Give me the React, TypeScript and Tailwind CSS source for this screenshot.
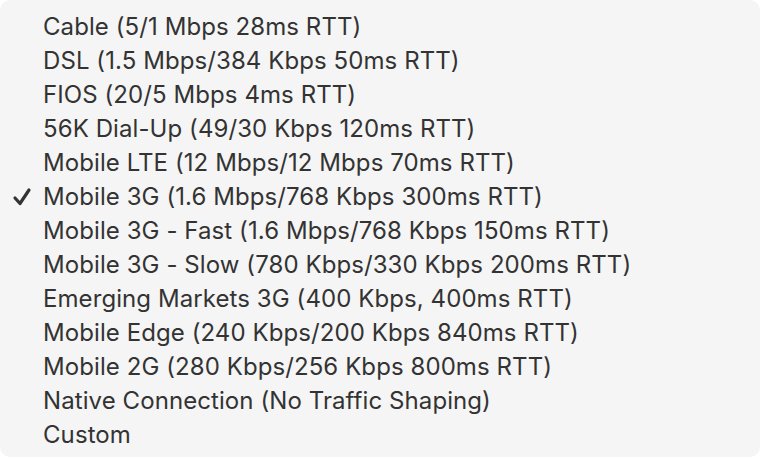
import React from "react";

const items = [
  "Cable (5/1 Mbps 28ms RTT)",
  "DSL (1.5 Mbps/384 Kbps 50ms RTT)",
  "FIOS (20/5 Mbps 4ms RTT)",
  "56K Dial-Up (49/30 Kbps 120ms RTT)",
  "Mobile LTE (12 Mbps/12 Mbps 70ms RTT)",
  "Mobile 3G (1.6 Mbps/768 Kbps 300ms RTT)",
  "Mobile 3G - Fast (1.6 Mbps/768 Kbps 150ms RTT)",
  "Mobile 3G - Slow (780 Kbps/330 Kbps 200ms RTT)",
  "Emerging Markets 3G (400 Kbps, 400ms RTT)",
  "Mobile Edge (240 Kbps/200 Kbps 840ms RTT)",
  "Mobile 2G (280 Kbps/256 Kbps 800ms RTT)",
  "Native Connection (No Traffic Shaping)",
  "Custom",
];

export default function App() {
  return (
    <div className="w-[760px] h-[458px] bg-white">
      <div
        className="w-[760px] h-[457px] bg-[#f5f5f5] rounded-[10px] pt-[10px] text-[#333333] text-[24px] tracking-[0.08px]"
        style={{ fontFamily: "Inter, 'Noto Sans', sans-serif" }}
      >
        {items.map((t, i) => (
          <div key={i} className="h-[34px] flex items-center">
            <div className="w-[43px] flex justify-center items-center pl-[1px]">
              {i === 5 && (
                <svg width="20" height="20" viewBox="0 0 20 20">
                  <path
                    d="M3 11 L8 16.5 L17 3"
                    fill="none"
                    stroke="#333333"
                    strokeWidth="3.2"
                    strokeLinecap="round"
                    strokeLinejoin="round"
                  />
                </svg>
              )}
            </div>
            <span className="whitespace-nowrap leading-none">{t}</span>
          </div>
        ))}
      </div>
    </div>
  );
}
